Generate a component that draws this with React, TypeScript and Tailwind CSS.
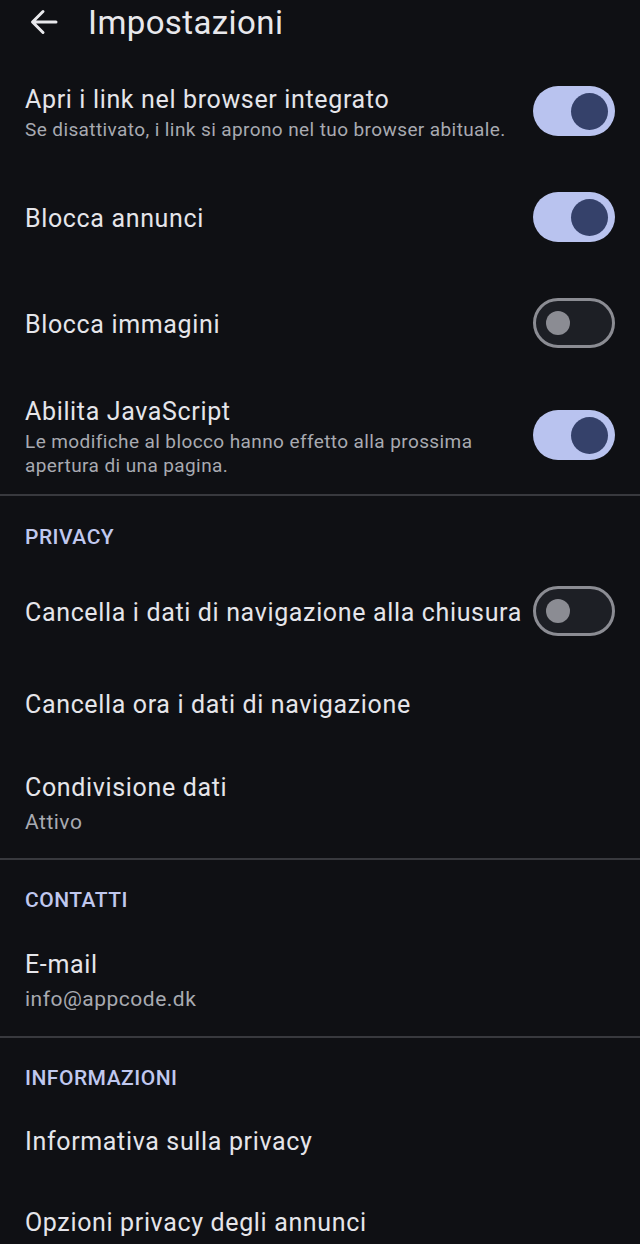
import React from 'react';

const font = { fontFamily: 'Roboto, "Noto Sans", sans-serif' };

function Toggle({ on }: { on: boolean }) {
  if (on) {
    return (
      <div className="flex h-[50px] w-[82px] shrink-0 items-center justify-end rounded-full bg-[#b9c3ef] pr-[7px]">
        <div className="h-[37px] w-[37px] rounded-full bg-[#35416a]" />
      </div>
    );
  }
  return (
    <div className="flex h-[50px] w-[82px] shrink-0 items-center rounded-full border-[3px] border-[#8b8c93] bg-[#1d1f25] pl-[10px]">
      <div className="h-[24px] w-[24px] rounded-full bg-[#8b8c93]" />
    </div>
  );
}

function Row({
  title,
  sub,
  summary,
  toggle,
  h,
  extra = '',
}: {
  title: string;
  sub?: string;
  summary?: string;
  toggle?: boolean;
  h: string;
  extra?: string;
}) {
  return (
    <div className={`flex items-center justify-between gap-2 px-[25px] ${h} ${extra}`}>
      <div className="min-w-0 flex-1 pt-[3px]">
        <div className="whitespace-nowrap text-[25px] leading-[32px] tracking-[0.65px] text-[#e5e5ea]">{title}</div>
        {sub && (
          <div className="mt-[2px] text-[19px] leading-[24px] tracking-[0.4px] text-[#a8aab1]">{sub}</div>
        )}
        {summary && (
          <div className="mt-[5px] text-[21px] leading-[26px] tracking-[0.5px] text-[#a8aab1]">{summary}</div>
        )}
      </div>
      {toggle !== undefined && <Toggle on={toggle} />}
    </div>
  );
}

function SectionHeader({ label, h, extra = '' }: { label: string; h: string; extra?: string }) {
  return (
    <div className={`flex items-center px-[25px] ${h} ${extra}`}>
      <span className="text-[21px] font-medium tracking-[0.5px] text-[#c0c8ef]">{label}</span>
    </div>
  );
}

function Divider() {
  return <div className="h-[2px] bg-[#38393e]" />;
}

export default function App() {
  return (
    <div className="h-[1244px] overflow-hidden bg-[#0f1014]" style={font}>
      {/* Toolbar */}
      <div className="flex h-[44px] items-center">
        <svg className="ml-[29px]" width="30" height="30" viewBox="0 0 30 30" fill="none">
          <path
            d="M27 15H4M14 4.5L3.5 15L14 25.5"
            stroke="#e8e8ec"
            strokeWidth="3"
            strokeLinecap="round"
            strokeLinejoin="round"
          />
        </svg>
        <h1 className="ml-[29px] text-[33px] leading-none tracking-[0.4px] text-[#e8e8ec]">Impostazioni</h1>
      </div>

      <Row
        h="h-[106px]"
        extra="mt-[14px]"
        title="Apri i link nel browser integrato"
        sub="Se disattivato, i link si aprono nel tuo browser abituale."
        toggle={true}
      />
      <Row h="h-[106px]" title="Blocca annunci" toggle={true} />
      <Row h="h-[106px]" title="Blocca immagini" toggle={false} />
      <Row
        h="h-[118px]"
        title="Abilita JavaScript"
        sub="Le modifiche al blocco hanno effetto alla prossima apertura di una pagina."
        toggle={true}
      />
      <Divider />

      <SectionHeader label="PRIVACY" h="h-[80px]" extra="pt-[4px]" />
      <Row h="h-[70px]" title="Cancella i dati di navigazione alla chiusura" toggle={false} />
      <Row h="h-[114px]" title="Cancella ora i dati di navigazione" />
      <Row h="h-[98px]" extra="pb-[14px]" title="Condivisione dati" summary="Attivo" />
      <Divider />

      <SectionHeader label="CONTATTI" h="h-[78px]" extra="pt-[4px]" />
      <Row h="h-[98px]" extra="pb-[16px]" title="E-mail" summary="info@appcode.dk" />
      <Divider />

      <SectionHeader label="INFORMAZIONI" h="h-[62px]" extra="pt-[20px]" />
      <Row h="h-[80px]" title="Informativa sulla privacy" />
      <Row h="h-[82px]" title="Opzioni privacy degli annunci" />
    </div>
  );
}
